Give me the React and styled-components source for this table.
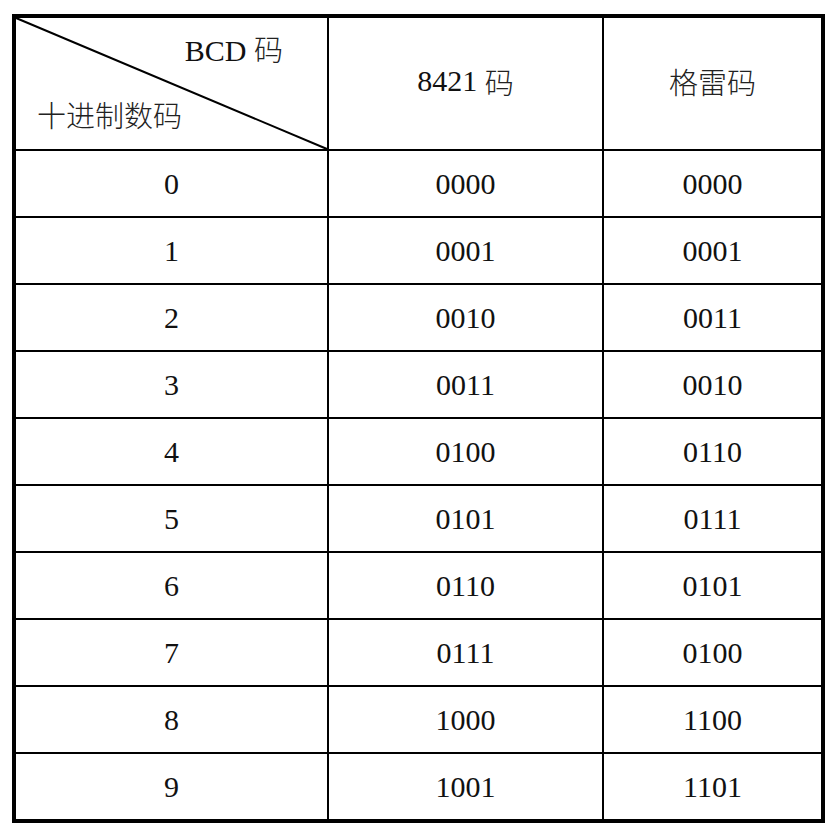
import React from "react";
import styled, { createGlobalStyle } from "styled-components";

const Global = createGlobalStyle`
  html, body { margin: 0; padding: 0; background: #fff; }
  body { font-family: "Liberation Serif", "Noto Sans CJK SC", serif; color: #000; }
`;

const Page = styled.div`
  padding: 14px 0 0 12px;
`;

const Table = styled.div`
  display: grid;
  grid-template-columns: 311px 273px 217px;
  grid-template-rows: 131px repeat(10, 65px);
  gap: 2px;
  width: 805px;
  background: #000;
  border: 4px solid #000;
  box-sizing: content-box;
`;

const Cell = styled.div`
  background: #fff;
  display: flex;
  align-items: center;
  justify-content: center;
  font-family: "Liberation Serif", serif;
  font-size: 30px;
  line-height: 1;
  color: #111;
`;

const HeadCell = styled(Cell)`
  font-size: 29px;
  white-space: pre;
  padding-bottom: 5px;
`;

const Latin = styled.span`
  font-family: "Liberation Serif", serif;
  font-size: 30px;
`;

const Han = styled.span`
  font-family: "Noto Sans CJK SC", sans-serif;
  font-weight: 300;
  font-size: 29px;
  color: #222;
`;

const CornerCell = styled.div`
  position: relative;
  background: #fff;
  display: flex;
  flex-direction: column;
  justify-content: space-between;
  padding: 16px 44px 17px 21px;
  font-size: 29px;
  line-height: 1;
  color: #111;
`;

const CornerTop = styled.span`
  align-self: flex-end;
  white-space: pre;
`;

const CornerBottom = styled.span`
  align-self: flex-start;
`;

const Diagonal = styled.svg`
  position: absolute;
  inset: 0;
  width: 100%;
  height: 100%;
  overflow: visible;
`;

const rows = [
  ["0", "0000", "0000"],
  ["1", "0001", "0001"],
  ["2", "0010", "0011"],
  ["3", "0011", "0010"],
  ["4", "0100", "0110"],
  ["5", "0101", "0111"],
  ["6", "0110", "0101"],
  ["7", "0111", "0100"],
  ["8", "1000", "1100"],
  ["9", "1001", "1101"],
];

export default function App() {
  return (
    <>
      <Global />
      <Page>
        <Table>
          <CornerCell>
            <Diagonal viewBox="0 0 100 100" preserveAspectRatio="none">
              <line
                x1="0"
                y1="0"
                x2="100"
                y2="100"
                stroke="#000"
                strokeWidth="2"
                vectorEffect="non-scaling-stroke"
              />
            </Diagonal>
            <CornerTop>
              <Latin>BCD </Latin>
              <Han>码</Han>
            </CornerTop>
            <CornerBottom>
              <Han>十进制数码</Han>
            </CornerBottom>
          </CornerCell>
          <HeadCell>
            <Latin>8421 </Latin>
            <Han>码</Han>
          </HeadCell>
          <HeadCell>
            <Han>格雷码</Han>
          </HeadCell>
          {rows.map((r) =>
            r.map((v, i) => <Cell key={r[0] + "-" + i}>{v}</Cell>)
          )}
        </Table>
      </Page>
    </>
  );
}
